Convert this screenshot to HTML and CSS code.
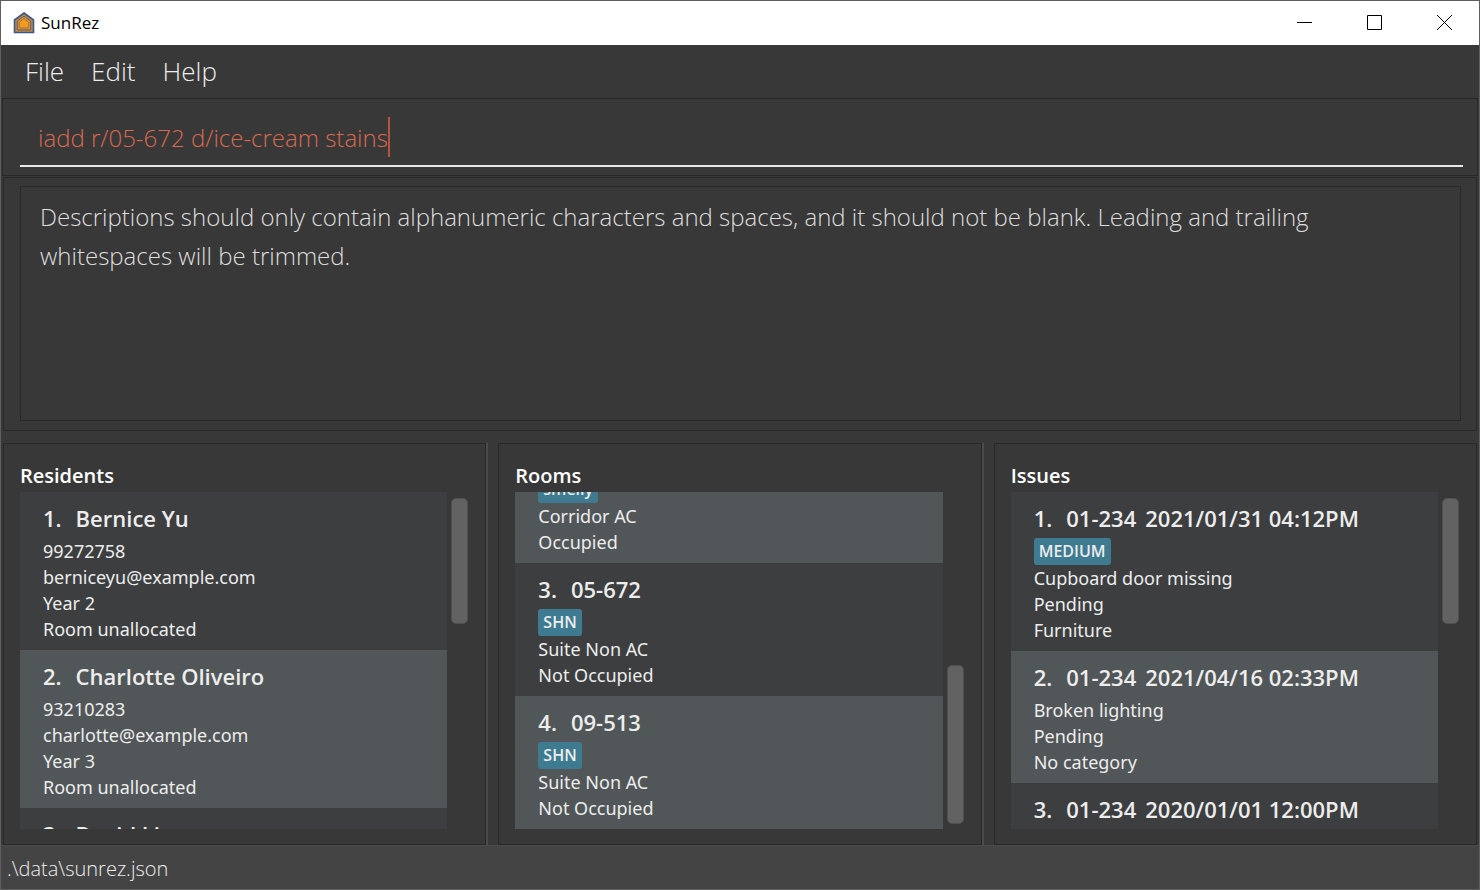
FILE: index.html
```html
<!DOCTYPE html>
<html lang="en">
<head>
<meta charset="utf-8">
<title>SunRez</title>
<link rel="stylesheet" href="styles.css">
</head>
<body>
<div class="window">
  <header class="titlebar">
    <svg class="logo" width="22" height="22" viewBox="0 0 22 22" aria-hidden="true">
      <path d="M11 1 L20.500 8 V20.500 H1.500 V8 Z" fill="#d58a35" stroke="#35598c" stroke-width="1.600"/>
      <path d="M11 4 L17.800 9.200 V18 H4.200 V9.200 Z" fill="#e8952e" stroke="#4a5f80" stroke-width="1"/>
      <path d="M11 6.500 L15.800 10.300 V16 H6.200 V10.300 Z" fill="#f69a1c" stroke="#8a6f55" stroke-width="0.900"/>
    </svg>
    <h1 class="app-name">SunRez</h1>
    <div class="window-controls">
      <button class="control" type="button" aria-label="Minimize"><svg width="15" height="15" viewBox="0 0 15 15"><path d="M0 7.500H15"/></svg></button>
      <button class="control" type="button" aria-label="Maximize"><svg width="15" height="15" viewBox="0 0 15 15"><path d="M.5 .5H14.500V14.500H.5Z"/></svg></button>
      <button class="control" type="button" aria-label="Close"><svg width="15" height="15" viewBox="0 0 15 15"><path d="M0 0L15 15M15 0L0 15"/></svg></button>
    </div>
  </header>

  <nav class="menubar">
    <button class="menu" type="button">File</button>
    <button class="menu" type="button">Edit</button>
    <button class="menu" type="button">Help</button>
  </nav>

  <form class="command-pane">
    <div class="command-field">
      <input class="command-input" type="text" aria-label="Command" size="26" value="iadd r/05-672 d/ice-cream stains">
      <span class="caret"></span>
    </div>
  </form>

  <section class="result-pane">
    <p class="result">Descriptions should only contain alphanumeric characters and spaces, and it should not be blank. Leading and trailing whitespaces will be trimmed.</p>
  </section>

  <main class="lists">
    <section class="panel">
      <h2 class="panel-title">Residents</h2>
      <div class="panel-body">
        <ul class="list">
          <li class="item">
            <h3 class="name"><span>1.</span><span>Bernice Yu</span></h3>
            <p>99272758</p><p>berniceyu@example.com</p><p>Year 2</p><p>Room unallocated</p>
          </li>
          <li class="item alt">
            <h3 class="name"><span>2.</span><span>Charlotte Oliveiro</span></h3>
            <p>93210283</p><p>charlotte@example.com</p><p>Year 3</p><p>Room unallocated</p>
          </li>
          <li class="item">
            <h3 class="name"><span>3.</span><span>David Li</span></h3>
          </li>
        </ul>
        <div class="scroll"><div class="thumb"></div></div>
      </div>
    </section>
    <div class="divider"></div>
    <section class="panel">
      <h2 class="panel-title">Rooms</h2>
      <div class="panel-body">
        <ul class="list at-end">
          <li class="item alt">
            <span class="tag">smelly</span>
            <p>Corridor AC</p><p>Occupied</p>
          </li>
          <li class="item">
            <h3 class="name"><span>3.</span><span>05-672</span></h3>
            <span class="tag">SHN</span>
            <p>Suite Non AC</p><p>Not Occupied</p>
          </li>
          <li class="item alt">
            <h3 class="name"><span>4.</span><span>09-513</span></h3>
            <span class="tag">SHN</span>
            <p>Suite Non AC</p><p>Not Occupied</p>
          </li>
        </ul>
        <div class="scroll at-end"><div class="thumb tall"></div></div>
      </div>
    </section>
    <div class="divider"></div>
    <section class="panel">
      <h2 class="panel-title">Issues</h2>
      <div class="panel-body">
        <ul class="list">
          <li class="item">
            <h3 class="name"><span>1.</span><span class="room">01-234 <time>2021/01/31 04:12PM</time></span></h3>
            <span class="tag">MEDIUM</span>
            <p>Cupboard door missing</p><p>Pending</p><p>Furniture</p>
          </li>
          <li class="item alt">
            <h3 class="name"><span>2.</span><span class="room">01-234 <time>2021/04/16 02:33PM</time></span></h3>
            <p>Broken lighting</p><p>Pending</p><p>No category</p>
          </li>
          <li class="item">
            <h3 class="name"><span>3.</span><span class="room">01-234 <time>2020/01/01 12:00PM</time></span></h3>
          </li>
        </ul>
        <div class="scroll"><div class="thumb"></div></div>
      </div>
    </section>
  </main>

  <footer class="statusbar">.\data\sunrez.json</footer>
</div>
</body>
</html>
```
FILE: styles.css
```css
* { box-sizing: border-box; }

body, h1, h2, h3, p, ul { margin: 0; padding: 0; }

body {
  font-family: "Open Sans", "Noto Sans", sans-serif;
  background: #383838;
  color: #ededed;
}

button, input {
  font: inherit;
  color: inherit;
  background: none;
  border: 0;
  padding: 0;
}

.window {
  display: flex;
  flex-direction: column;
  height: 100vh;
  border: 1px solid #5f5f5f;
}

.titlebar {
  display: flex;
  align-items: center;
  flex: none;
  height: 44px;
  padding-left: 12px;
  padding-bottom: 1px;
  gap: 6px;
  background: #fff;
  color: #000;
}

.app-name { font-size: 17px; font-weight: 400; }

.window-controls { display: flex; margin-left: auto; height: 100%; }

.control {
  display: grid;
  place-items: center;
  width: 70px;
}

.control svg { fill: none; stroke: #000; stroke-width: 1; }

.menubar {
  display: flex;
  flex: none;
  height: 53px;
  padding-left: 24px;
  padding-bottom: 2px;
  gap: 27px;
}

.menu { font-size: 26px; font-weight: 300; }

.command-pane {
  flex: none;
  height: 78px;
  margin: 0 1px;
  padding: 18px 14px 8px 17px;
  border: 1px solid #292929;
}

.command-field {
  display: flex;
  height: 50px;
  padding-left: 18px;
  border-bottom: 2px solid #e8e8e8;
}

.command-input {
  field-sizing: content;
  height: 40px;
  font-size: 24px;
  font-weight: 300;
  color: #d9694f;
  outline: none;
}

.caret { width: 2px; height: 40px; background: #b5553f; }

.result-pane {
  flex: 254 1 254px;
  min-height: 0;
  margin: 1px 2px 0;
  padding: 8px 15px 9px 16px;
  border: 1px solid #292929;
}

.result {
  height: 100%;
  padding: 10px 19px;
  border: 1px solid #292929;
  font-size: 24px;
  font-weight: 300;
  line-height: 39px;
  color: #dedede;
}

.lists {
  display: grid;
  grid-template-columns: 1fr 12px 1fr 12px 1fr;
  flex: 402 1 402px;
  min-height: 0;
  margin: 12px 2px 0;
}

.panel {
  display: flex;
  flex-direction: column;
  min-width: 0;
  min-height: 0;
  padding: 16px 17px 15px 16px;
  border: 1px solid #292929;
}

.divider { border-left: 2px solid #4b4b4b; }

.panel-title {
  height: 32px;
  font-size: 20px;
  font-weight: 600;
  line-height: 32px;
  color: #fff;
}

.panel-body { display: flex; flex: 1; min-height: 0; gap: 4px; }

.list {
  display: flex;
  flex-direction: column;
  flex: 1;
  min-width: 0;
  overflow: hidden;
  list-style: none;
  background: #3c3e3f;
}

.list.at-end { justify-content: flex-end; }

.item {
  flex: none;
  padding: 8px 8px 8px 23px;
  background: #3c3e3f;
  font-family: "Noto Sans", "Open Sans", sans-serif;
  font-size: 18px;
  line-height: 26px;
}

.item.alt { background: #515658; }

.name {
  display: flex;
  gap: 14px;
  height: 38px;
  font-family: "Open Sans", "Noto Sans", sans-serif;
  font-size: 22px;
  font-weight: 600;
  line-height: 36px;
  white-space: nowrap;
}

.room { display: flex; gap: 9px; }

.tag {
  display: block;
  width: fit-content;
  height: 27px;
  padding: 0 5px;
  border-radius: 3px;
  background: #3e7b91;
  font-family: "Open Sans", "Noto Sans", sans-serif;
  font-size: 16px;
  font-weight: 600;
  line-height: 27px;
}

.scroll { display: flex; flex-direction: column; width: 17px; padding: 6px 0 5px; }

.scroll.at-end { justify-content: flex-end; }

.thumb {
  height: 126px;
  border: 1px solid #505050;
  border-radius: 5px;
  background: #626262;
}

.thumb.tall { height: 159px; }

.statusbar {
  flex: none;
  height: 44px;
  padding-left: 6px;
  border-top: 1px solid #4b4b4b;
  background: #444;
  font-size: 20px;
  font-weight: 300;
  line-height: 46px;
}
```
